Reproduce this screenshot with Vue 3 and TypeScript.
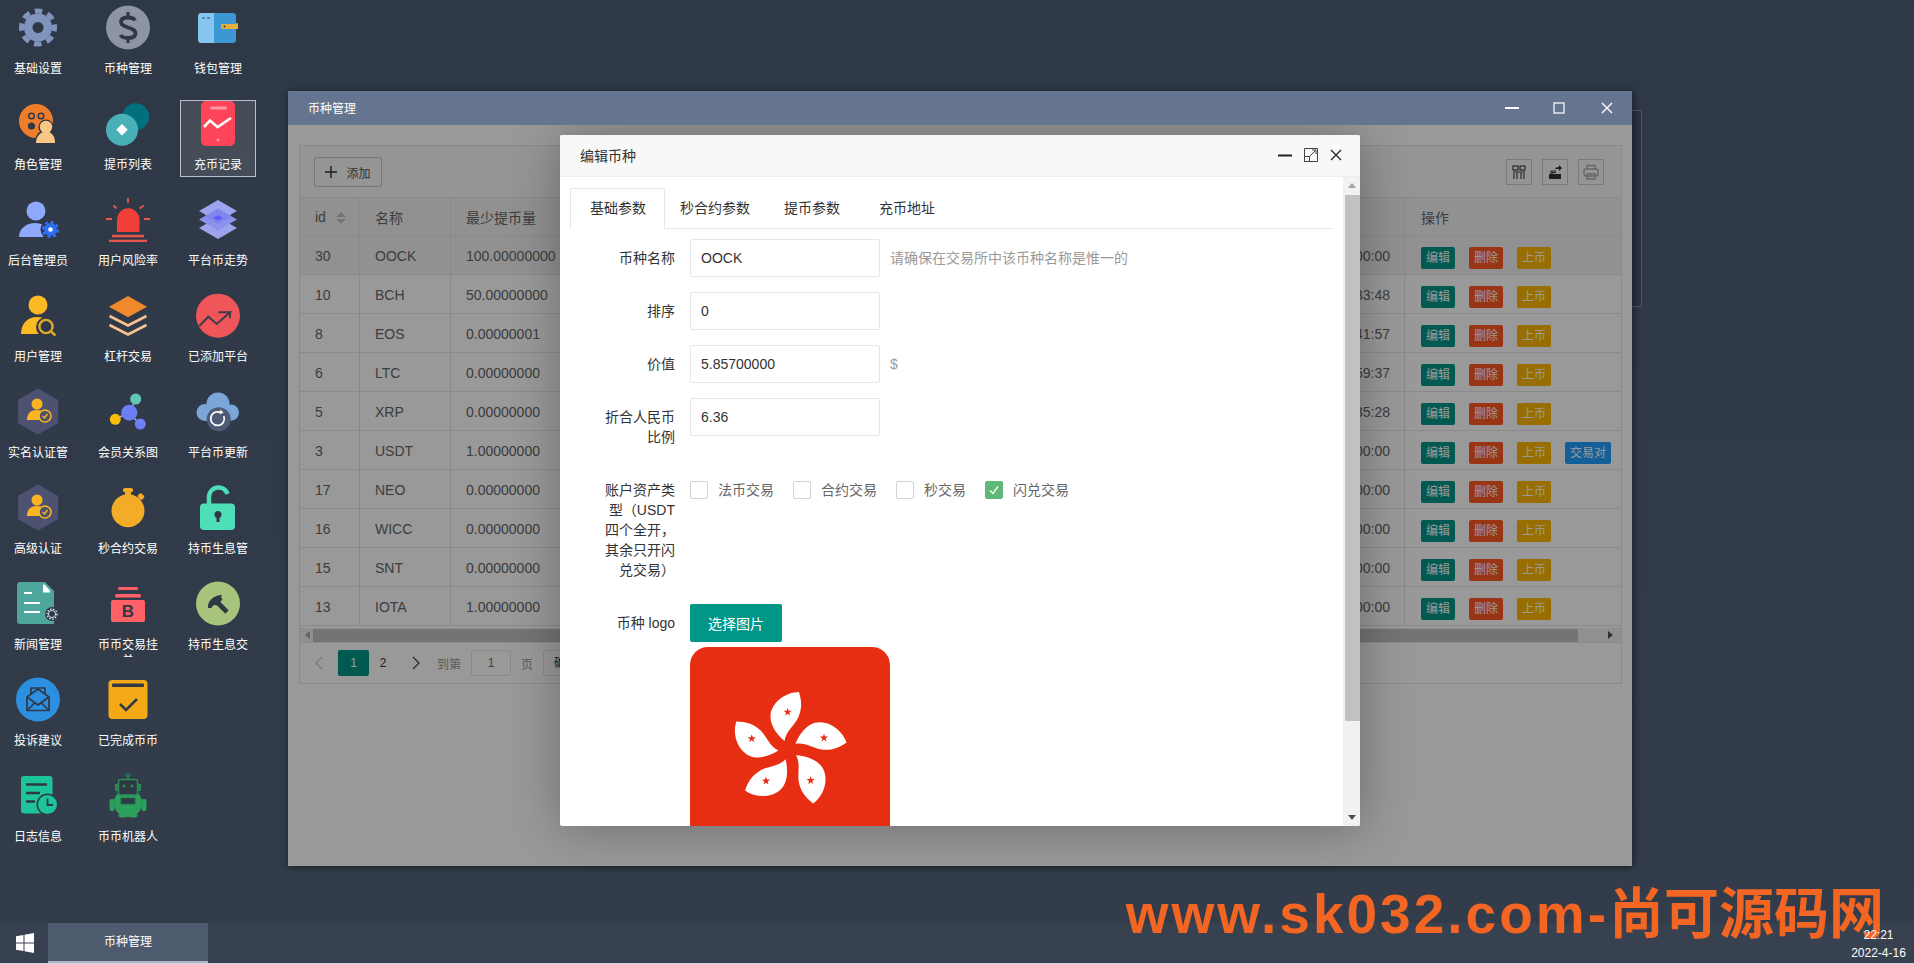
<script setup lang="ts">
const D = "#303846";

const hex = `<path d="M23 1 42.5 12v23L23 46 3.5 35V12z" fill="#4d5270" stroke="#4d5270" stroke-width="1" stroke-linejoin="round"/>
<circle cx="22" cy="16" r="5.5" fill="#fbb422"/><path d="M12 32c0-6 3-10 10-10s10 4 10 10z" fill="#fbb422"/>
<circle cx="30" cy="28" r="6" fill="#4d5270" stroke="#fbb422" stroke-width="1.6"/><path d="m27.5 28 2 2 3-4" fill="none" stroke="#fbb422" stroke-width="1.4"/>`;

const columns: { name: string; svg: string; selected?: boolean }[][] = [
  [
    {
      name: "基础设置",
      svg: `<circle cx="23" cy="23.5" r="14" fill="#7f95bd"/><circle cx="23" cy="23.5" r="16.5" fill="none" stroke="#7f95bd" stroke-width="5" stroke-dasharray="7.5 5.46" stroke-dashoffset="3.7"/><circle cx="23" cy="23.5" r="5.5" fill="${D}"/>`,
    },
    {
      name: "角色管理",
      svg: `<circle cx="21" cy="21" r="17" fill="#ef7e2c"/><circle cx="16.5" cy="16" r="2.8" fill="none" stroke="${D}" stroke-width="1.5"/><circle cx="26" cy="16" r="2.8" fill="none" stroke="${D}" stroke-width="1.5"/><circle cx="16.5" cy="26" r="3.6" fill="${D}"/>
<circle cx="31" cy="27" r="7.6" fill="${D}"/><path d="M19.5 44c0-8 4-12 8-14h7c4 2 7 6 7 14z" fill="${D}"/><circle cx="31" cy="27" r="6.2" fill="#f9c786"/><path d="M21 43c0-6 3-9 7-11h6c4 2 6 5 6 11z" fill="#f9c786"/>`,
    },
    {
      name: "后台管理员",
      svg: `<circle cx="21" cy="15" r="9.5" fill="#8fa8fb"/><path d="M4 41c0-9 8-14 16-14s17 5 17 14z" fill="#8fa8fb"/><circle cx="35.5" cy="33.5" r="10" fill="${D}"/><circle cx="35.5" cy="33.5" r="6.5" fill="#2e6ef0"/><circle cx="35.5" cy="33.5" r="7.4" fill="none" stroke="#2e6ef0" stroke-width="2.6" stroke-dasharray="3.2 2.6"/><circle cx="35.5" cy="33.5" r="2.2" fill="#fff"/>`,
    },
    {
      name: "用户管理",
      svg: `<circle cx="23" cy="13" r="9.5" fill="#fbb924"/><path d="M6 42c0-10 6-17 16-17s16 7 16 17z" fill="#fbb924"/><circle cx="31" cy="35" r="10" fill="${D}"/><circle cx="31" cy="34.5" r="6.6" fill="${D}" stroke="#e0a92c" stroke-width="2.4"/><path d="m36 39.5 4.5 4" stroke="#e0a92c" stroke-width="2.4"/>`,
    },
    { name: "实名认证管", svg: hex },
    { name: "高级认证", svg: hex },
    {
      name: "新闻管理",
      svg: `<path d="M5 2h25l9 9v33H5a3 3 0 0 1-3-3V5a3 3 0 0 1 3-3z" fill="#4fa69c"/><path d="M28 4.5h1.5l5.5 6v2h-7z" fill="#fff"/><path d="M9 13h8M9 23h16M9 32h16" stroke="#fff" stroke-width="2.2"/><circle cx="37" cy="34" r="7" fill="${D}"/><circle cx="37" cy="34" r="3.6" fill="none" stroke="#cde" stroke-width="1"/><circle cx="37" cy="34" r="5" fill="none" stroke="#cde" stroke-width="1.4" stroke-dasharray="1.5 1.5"/>`,
    },
    {
      name: "投诉建议",
      svg: `<circle cx="23" cy="23.5" r="22" fill="#2b90e0"/><g fill="none" stroke="${D}" stroke-width="1.7" stroke-linejoin="round"><path d="M12 21v13.5h22V21L23 13z"/><path d="M12 21l11 8 11-8"/><path d="m12 34.5 8-8M34 34.5l-8-8"/><path d="M16 17.5V12h14v5.5"/></g>`,
    },
    {
      name: "日志信息",
      svg: `<rect x="6" y="4" width="31.5" height="37.5" rx="3" fill="#1dc49a"/><path d="M11 12.5h21M11 21h14M11 29.5h9" stroke="${D}" stroke-width="2.6"/><circle cx="32.5" cy="32.5" r="11" fill="${D}"/><circle cx="32.5" cy="32.5" r="9.5" fill="#1dc49a"/><path d="M32.5 26.5v6.5h5.5" fill="none" stroke="${D}" stroke-width="1.8"/>`,
    },
  ],
  [
    {
      name: "币种管理",
      svg: `<circle cx="23" cy="23.5" r="22" fill="#8d95a5"/><path d="M30 16.5c-2-4-14-4.5-14 1.5 0 6.5 14.5 4.5 14.5 11.5 0 6-13 5.5-15 1.5" fill="none" stroke="${D}" stroke-width="3.8"/><path d="M23 8v6M23 33v6" stroke="${D}" stroke-width="3.2"/>`,
    },
    {
      name: "提币列表",
      svg: `<circle cx="30.7" cy="16.7" r="13.5" fill="#00707f"/><circle cx="17" cy="29.7" r="16" fill="#4ab0b8"/><path d="m17 24 5.7 5.7L17 35.4l-5.7-5.7z" fill="#fff"/>`,
    },
    {
      name: "用户风险率",
      svg: `<path d="M12 36V24a11 11.5 0 0 1 22.5 0v12z" fill="#f1403a"/><path d="M7 40h32M4 45h38" stroke="#e9554f" stroke-width="2.4"/><path d="M23 2v5M8.5 9.5 11.5 12.5M39 9.5l-4.5 3M1 23h6M39 23h6" stroke="#e9554f" stroke-width="1.8"/>`,
    },
    {
      name: "杠杆交易",
      svg: `<path d="m23 4 19 10.7-19 10.6L4 14.7z" fill="#ee8a2b"/><path d="m4.5 24 18.5 9.5L41.5 24M4.5 33 23 42.5 41.5 33" fill="none" stroke="#f6c28f" stroke-width="2.6"/>`,
    },
    {
      name: "会员关系图",
      svg: `<path d="M24 25 31 11M24 25 10 31M24 25 35 36" stroke="#9fb0f5" stroke-width="1.5"/><circle cx="24.3" cy="24.7" r="8" fill="#6d7ff5"/><circle cx="30.7" cy="11" r="5.5" fill="#5ec9b4"/><circle cx="10.3" cy="31.3" r="5.5" fill="#f7bd0a"/><circle cx="35.3" cy="36" r="5.5" fill="#6d7ff5"/>`,
    },
    {
      name: "秒合约交易",
      svg: `<circle cx="23" cy="26.7" r="16.5" fill="#f4ab28"/><rect x="20" y="7" width="6" height="6" fill="#f4ab28"/><rect x="18" y="4" width="10" height="4" rx="1.5" fill="#f4ab28"/><rect x="33" y="10" width="6" height="5" rx="1.5" transform="rotate(40 36 12.5)" fill="#f4ab28"/>`,
    },
    {
      name: "币币交易挂单",
      svg: `<rect x="13" y="7" width="20" height="3" rx="1.5" fill="#ff6166"/><rect x="10" y="14" width="26" height="3.5" rx="1.5" fill="#ff6166"/><rect x="6" y="20" width="34" height="22" rx="2" fill="#ff6166"/><text x="23" y="37" text-anchor="middle" font-family="Liberation Sans, sans-serif" font-weight="700" font-size="17" fill="${D}">B</text>`,
    },
    {
      name: "已完成币币",
      svg: `<rect x="3.5" y="4" width="39" height="39" rx="4" fill="#f4aa16"/><rect x="7" y="7.5" width="32" height="3.6" rx="1" fill="${D}"/><path d="m15 28 6 6 11-11" fill="none" stroke="${D}" stroke-width="2.5"/>`,
    },
    {
      name: "币币机器人",
      svg: `<path d="M23 3v4" stroke="#2a8a53" stroke-width="1.2"/><circle cx="23" cy="3" r="2" fill="none" stroke="#2a8a53"/><circle cx="23" cy="31" r="14" fill="#2ba05d"/><rect x="13.5" y="7.5" width="19" height="15.5" rx="2" fill="${D}" stroke="#2a8a53" stroke-width="1.6"/><circle cx="19" cy="14" r="1.5" fill="#2a8a53"/><circle cx="27" cy="14" r="1.5" fill="#2a8a53"/><rect x="10" y="12" width="3" height="7" fill="#2a8a53"/><rect x="33" y="12" width="3" height="7" fill="#2a8a53"/><rect x="16" y="26" width="14" height="6" fill="${D}" stroke="#1c6f40"/><rect x="4.5" y="27" width="5" height="12" rx="2" fill="#2ba05d"/><rect x="36.5" y="27" width="5" height="12" rx="2" fill="#2ba05d"/><ellipse cx="17.5" cy="43.5" rx="4" ry="2" fill="#2ba05d"/><ellipse cx="28.5" cy="43.5" rx="4" ry="2" fill="#2ba05d"/>`,
    },
  ],
  [
    {
      name: "钱包管理",
      svg: `<path d="M6 9h14v30H6a3 3 0 0 1-3-3V12a3 3 0 0 1 3-3z" fill="#85c5ef"/><path d="M19 9h19a3 3 0 0 1 3 3v24a3 3 0 0 1-3 3H19z" fill="#3d97d3"/><rect x="7" y="13" width="3" height="2" fill="#4f8fc0"/><rect x="12" y="13" width="3" height="2" fill="#4f8fc0"/><path d="M26 20h13l4-1v6H28a2.5 2.5 0 0 1-2-2.5z" fill="#e8ad3a"/><circle cx="29.5" cy="22.5" r="1" fill="${D}"/>`,
    },
    {
      name: "充币记录",
      selected: true,
      svg: `<rect x="6" y="1" width="34" height="45" rx="5" fill="#fd4458"/><rect x="15" y="6.5" width="17" height="3" rx="1.5" fill="#ff9aa5"/><path d="m9 27 6-6.5 7.5 6.5L36 18" fill="none" stroke="#fff" stroke-width="2.6"/><circle cx="23" cy="40" r="1.5" fill="#ff9aa5"/>`,
    },
    {
      name: "平台币走势",
      svg: `<path d="m23 21 19 11-19 11L4 32z" fill="#9ea3ee"/><path d="m23 12.5 19 11-19 11-19-11z" fill="#8d92ee"/><path d="m23 4 19 11-19 11L4 15z" fill="#9ea3ee"/><path d="m23 12.5 14 8-14 7.5-14-7.5z" fill="#7f86ee"/><path d="m23 19 5 3-5 2.5-5-2.5z" fill="#5e5eff"/>`,
    },
    {
      name: "已添加平台",
      svg: `<circle cx="23" cy="23.7" r="22" fill="#f0555a"/><path d="m4.3 34 9-9.3 8.5 7.3L35 20.3H23.3M35 20.3v6" fill="none" stroke="#3a3d4a" stroke-width="2"/>`,
    },
    {
      name: "平台币更新",
      svg: `<circle cx="23" cy="16" r="11.5" fill="#7aa7d8"/><circle cx="10" cy="24.5" r="8.5" fill="#7aa7d8"/><circle cx="36" cy="24.5" r="8" fill="#7aa7d8"/><rect x="10" y="22" width="26" height="11" fill="#7aa7d8"/><circle cx="23.7" cy="31.3" r="12" fill="#4d5b75"/><path d="M28.8 28a6.8 6.8 0 1 1-2.5-3" fill="none" stroke="#fff" stroke-width="1.7"/><path d="m25.5 21.5 3 3.2-3.8 1.5z" fill="#fff"/>`,
    },
    {
      name: "持币生息管",
      svg: `<rect x="5" y="19.5" width="35" height="26.5" rx="4" fill="#4fdfb8"/><path d="M14 20v-8a9.5 9.5 0 0 1 18.5-2" fill="none" stroke="#4fdfb8" stroke-width="4.5"/><circle cx="23" cy="30.5" r="3.5" fill="${D}"/><rect x="21.5" y="31" width="3" height="7" fill="${D}"/>`,
    },
    {
      name: "持币生息交",
      svg: `<circle cx="23" cy="23.5" r="22" fill="#a8c47c"/><path d="M22 22l10 10" stroke="${D}" stroke-width="4.6"/><path d="M13 28c-1-6 5-13 14-13-1 2-1 3 .5 4.5l-6 6c-2-1-4 0-5 2.5z" fill="${D}"/>`,
    },
  ],
];

const rows = [
  { id: 30, name: "OOCK", min: "100.00000000", time: "2020-01-01 00:00:00", hover: true },
  { id: 10, name: "BCH", min: "50.00000000", time: "2019-08-23 13:33:48" },
  { id: 8, name: "EOS", min: "0.00000001", time: "2019-08-23 10:41:57" },
  { id: 6, name: "LTC", min: "0.00000000", time: "2019-08-23 12:59:37" },
  { id: 5, name: "XRP", min: "0.00000000", time: "2019-08-23 09:35:28" },
  { id: 3, name: "USDT", min: "1.00000000", time: "2019-01-01 00:00:00", pair: true },
  { id: 17, name: "NEO", min: "0.00000000", time: "2020-01-01 00:00:00" },
  { id: 16, name: "WICC", min: "0.00000000", time: "2020-01-01 00:00:00" },
  { id: 15, name: "SNT", min: "0.00000000", time: "2020-01-01 00:00:00" },
  { id: 13, name: "IOTA", min: "1.00000000", time: "2020-01-01 00:00:00" },
];

const tabs = ["基础参数", "秒合约参数", "提币参数", "充币地址"];
const assetTypes = [
  { label: "法币交易", checked: false },
  { label: "合约交易", checked: false },
  { label: "秒交易", checked: false },
  { label: "闪兑交易", checked: true },
];
const petals = [0, 72, 144, 216, 288];
</script>

<template>
  <div class="desktop">
    <div class="icons">
      <template v-for="(col, c) in columns" :key="c">
        <div
          v-for="item in col"
          :key="item.name"
          class="shortcut"
          :class="{ selected: item.selected }"
        >
          <svg class="shortcut-icon" viewBox="0 0 46 46" width="46" height="46" v-html="item.svg"></svg>
          <div class="shortcut-label">{{ item.name }}</div>
        </div>
      </template>
    </div>

    <div class="ghost-window"></div>

    <div class="window">
      <div class="window-title">
        <span>币种管理</span>
        <div class="window-controls">
          <svg width="14" height="14" viewBox="0 0 14 14"><path d="M0 7h14" stroke="#fff" stroke-width="2" /></svg>
          <svg width="12" height="12" viewBox="0 0 12 12"><rect x="1" y="1" width="10" height="10" fill="none" stroke="#dfe4ec" stroke-width="1.5" /></svg>
          <svg width="12" height="12" viewBox="0 0 12 12"><path d="M1 1l10 10M11 1 1 11" stroke="#fff" stroke-width="1.4" /></svg>
        </div>
      </div>

      <div class="window-body">
        <div class="panel">
          <div class="toolbar">
            <button class="add-btn">
              <svg width="12" height="12" viewBox="0 0 12 12"><path d="M6 0v12M0 6h12" stroke="#333" stroke-width="1.4" /></svg>
              添加
            </button>
            <div class="tools">
              <div class="tool">
                <svg width="14" height="14" viewBox="0 0 14 14" fill="none" stroke="#333" stroke-width="1.1">
                  <rect x="1" y="1" width="5" height="4" /><rect x="8" y="1" width="5" height="4" />
                  <path d="M1 7h12M2 8v6M5 8v6M9 8v6M12 8v6" />
                </svg>
              </div>
              <div class="tool">
                <svg width="14" height="14" viewBox="0 0 14 14">
                  <path d="M1 9h12v5H1z" fill="#333" /><path d="M3 9V6h5M4 9V7.5h4" fill="none" stroke="#333" />
                  <path d="M7 4c1-2 3-2 4-2V0l3 3-3 3V4c-2 0-3 0-4 0z" fill="#333" />
                </svg>
              </div>
              <div class="tool">
                <svg width="16" height="16" viewBox="0 0 16 16" fill="none" stroke="#aaa" stroke-width="1.4">
                  <rect x="1" y="5" width="14" height="7" rx="2" /><path d="M4 5V1.5h8V5M4 10h8v5H4z" />
                </svg>
              </div>
            </div>
          </div>

          <table class="grid">
            <colgroup>
              <col style="width: 60px" /><col style="width: 91px" /><col style="width: 150px" />
              <col /><col style="width: 165px" /><col style="width: 216px" />
            </colgroup>
            <thead>
              <tr>
                <th>
                  id
                  <span class="sort"><i class="up"></i><i class="down"></i></span>
                </th>
                <th>名称</th>
                <th>最少提币量</th>
                <th></th>
                <th></th>
                <th>操作</th>
              </tr>
            </thead>
            <tbody>
              <tr v-for="row in rows" :key="row.id" :class="{ hover: row.hover }">
                <td>{{ row.id }}</td>
                <td>{{ row.name }}</td>
                <td>{{ row.min }}</td>
                <td></td>
                <td class="time">{{ row.time }}</td>
                <td>
                  <div class="ops">
                    <span class="op teal">编辑</span>
                    <span class="op red">删除</span>
                    <span class="op yellow">上币</span>
                    <span v-if="row.pair" class="op blue">交易对</span>
                  </div>
                </td>
              </tr>
            </tbody>
          </table>

          <div class="hscroll">
            <i class="arrow-left"></i>
            <div class="hthumb"></div>
            <i class="arrow-right"></i>
          </div>

          <div class="pager">
            <svg width="10" height="14" viewBox="0 0 10 14"><path d="M8 1 2 7l6 6" fill="none" stroke="#ccc" stroke-width="1.3" /></svg>
            <span class="page current">1</span>
            <span class="page">2</span>
            <svg class="next" width="10" height="14" viewBox="0 0 10 14"><path d="m2 1 6 6-6 6" fill="none" stroke="#444" stroke-width="1.3" /></svg>
            <span class="pager-text">到第</span>
            <span class="page-input">1</span>
            <span class="pager-text">页</span>
            <span class="page-go">确定</span>
          </div>
        </div>

        <div class="shade"></div>

        <div class="dialog">
          <div class="dialog-head">
            <span>编辑币种</span>
            <div class="dialog-controls">
              <svg width="14" height="14" viewBox="0 0 14 14"><path d="M0 7.5h14" stroke="#222" stroke-width="2" /></svg>
              <svg width="14" height="14" viewBox="0 0 14 14" fill="none" stroke="#444">
                <path d="M.5 8V.5h13v13H6" /><rect x=".5" y="8.5" width="5" height="5" /><path d="M6 8l6-6M8 2h4v4" />
              </svg>
              <svg width="12" height="12" viewBox="0 0 12 12"><path d="M1 1l10 10M11 1 1 11" stroke="#222" stroke-width="1.3" /></svg>
            </div>
          </div>

          <div class="dialog-body">
            <div class="dialog-content">
              <ul class="tabs">
                <li v-for="(tab, i) in tabs" :key="tab" class="tab" :class="{ active: i === 0 }">{{ tab }}</li>
              </ul>

              <form class="form" @submit.prevent>
                <div class="form-row">
                  <label>币种名称</label>
                  <input class="input" type="text" value="OOCK" />
                  <span class="hint">请确保在交易所中该币种名称是惟一的</span>
                </div>
                <div class="form-row">
                  <label>排序</label>
                  <input class="input" type="text" value="0" />
                </div>
                <div class="form-row">
                  <label>价值</label>
                  <input class="input" type="text" value="5.85700000" />
                  <span class="hint">$</span>
                </div>
                <div class="form-row">
                  <label>折合人民币比例</label>
                  <input class="input" type="text" value="6.36" />
                </div>
                <div class="form-row">
                  <label>账户资产类型（USDT四个全开，其余只开闪兑交易）</label>
                  <div class="checks">
                    <div v-for="t in assetTypes" :key="t.label" class="check">
                      <span class="box" :class="{ on: t.checked }">
                        <svg v-if="t.checked" width="12" height="12" viewBox="0 0 12 12"><path d="m2 6.5 3 3 5-7" fill="none" stroke="#fff" stroke-width="1.3" /></svg>
                      </span>
                      {{ t.label }}
                    </div>
                  </div>
                </div>
                <div class="form-row logo-row">
                  <label>币种 logo</label>
                  <div>
                    <button class="pick" type="button">选择图片</button>
                    <svg class="flag" width="200" height="200" viewBox="-100 -100 200 200">
                      <rect x="-100" y="-100" width="200" height="200" rx="18" fill="#e72e13" />
                      <g transform="translate(-2 3)">
                        <g v-for="deg in petals" :key="deg" :transform="`rotate(${deg})`">
                          <path
                            d="M-3.5-9C-11-15-18-25-17.5-34-17-47-3-58 11-58 14-48 14-41 10-32 6-24-2-19-3.5-9z"
                            fill="#fff"
                          />
                          <polygon
                            transform="translate(2 -6) scale(.8)"
                            points="-3,-45.5 -1.8,-41.7 2.2,-41.7 -1,-39.3 .2,-35.5 -3,-37.8 -6.2,-35.5 -5,-39.3 -8.2,-41.7 -4.2,-41.7"
                            fill="#e72e13"
                          />
                        </g>
                      </g>
                    </svg>
                  </div>
                </div>
              </form>
            </div>

            <div class="vscroll">
              <i class="arrow-up"></i>
              <div class="vthumb"></div>
              <i class="arrow-down"></i>
            </div>
          </div>
        </div>
      </div>
    </div>

    <div class="watermark"><span class="wm-latin">www.sk032.com-</span>尚可源码网</div>

    <div class="taskbar">
      <div class="start">
        <svg width="18" height="20" viewBox="0 0 18 20">
          <path d="M0 3.2 7.5 2v7.5H0zM8.5 1.8 18 0v9.5H8.5zM0 10.5h7.5V18L0 16.8zM8.5 10.5H18V20l-9.5-1.8z" fill="#fff" />
        </svg>
      </div>
      <div class="task">币种管理</div>
      <div class="clock">
        <div>22:21</div>
        <div>2022-4-16</div>
      </div>
    </div>
  </div>
</template>

<style>
html,
body {
  margin: 0;
  overflow: hidden;
}
</style>

<style scoped>
.desktop {
  position: relative;
  width: 1914px;
  height: 964px;
  overflow: hidden;
  background: linear-gradient(#2f3846, #333c4a);
  font-family: "Liberation Sans", "Noto Sans CJK SC", sans-serif;
  display: flex;
  flex-direction: column;
  justify-content: space-between;
}

.icons {
  display: grid;
  grid-auto-flow: column;
  grid-template-rows: repeat(9, 77px);
  grid-auto-columns: 76px;
  column-gap: 14px;
  row-gap: 19px;
  padding-top: 4px;
  height: 0;
}

.shortcut {
  height: 77px;
  overflow: hidden;
  text-align: center;
  color: #fff;
  box-sizing: border-box;
}

.shortcut.selected {
  background: rgba(255, 255, 255, 0.1);
  box-shadow: inset 0 0 0 1px #b9bfc9;
}

.shortcut-icon {
  display: block;
  margin: 0 auto 11px;
}

.shortcut-label {
  width: 66px;
  margin: 0 auto;
  font-size: 12px;
  line-height: 16px;
}

.ghost-window {
  position: absolute;
  left: 1400px;
  top: 110px;
  width: 240px;
  height: 195px;
  border: 1px solid #4e5a6c;
  border-radius: 2px;
  background: #2a3240;
}

.window {
  position: absolute;
  left: 288px;
  top: 91px;
  width: 1344px;
  height: 775px;
  display: flex;
  flex-direction: column;
  box-shadow: 1px 1px 8px rgba(0, 0, 0, 0.5);
}

.window-title {
  height: 34px;
  flex: none;
  box-sizing: border-box;
  display: flex;
  align-items: center;
  justify-content: space-between;
  padding: 0 19px 2px 20px;
  background: #66758f;
  color: #fff;
  font-size: 12px;
}

.window-controls {
  display: flex;
  align-items: center;
  gap: 36px;
  margin-top: 2px;
}

.window-controls svg:first-child {
  margin-right: -2px;
}

.window-body {
  position: relative;
  flex: 1;
  overflow: hidden;
  background: #fff;
  padding: 20px 10px 0 11px;
}

.shade {
  position: absolute;
  inset: 0;
  background: rgba(0, 0, 0, 0.4);
}

.panel {
  width: 1323px;
  box-sizing: border-box;
  border: 1px solid #e6e6e6;
  color: #666;
  font-size: 14px;
}

.toolbar {
  height: 51px;
  box-sizing: border-box;
  padding: 11px 17px 0 14px;
  display: flex;
  justify-content: space-between;
  background: #f8f8f8;
}

.add-btn {
  width: 68px;
  height: 30px;
  padding: 0;
  box-sizing: border-box;
  border: 1px solid #c9c9c9;
  border-radius: 2px;
  background: transparent;
  color: #555;
  font: 12px "Liberation Sans", "Noto Sans CJK SC", sans-serif;
  display: flex;
  align-items: center;
  justify-content: center;
  gap: 9px;
}

.tools {
  display: flex;
  gap: 10px;
  padding-top: 2px;
}

.tool {
  width: 26px;
  height: 26px;
  box-sizing: border-box;
  border: 1px solid #ccc;
  display: flex;
  align-items: center;
  justify-content: center;
}

.grid {
  width: 100%;
  table-layout: fixed;
  border-collapse: separate;
  border-spacing: 0;
}

.grid th,
.grid td {
  height: 39px;
  box-sizing: border-box;
  padding: 1px 15px 0;
  text-align: left;
  font-weight: 400;
  white-space: nowrap;
  overflow: hidden;
  border-bottom: 1px solid #e6e6e6;
  border-right: 1px solid #e6e6e6;
}

.grid th {
  background: #f2f2f2;
  border-top: 1px solid #e6e6e6;
  padding-top: 0;
}

.grid th:last-child {
  padding-left: 16px;
}

.grid th:last-child,
.grid td:last-child {
  border-right: 0;
}

.grid tr.hover td {
  background: #f2f2f2;
}

.grid td.time {
  padding-left: 20px;
}

.sort {
  display: inline-block;
  vertical-align: middle;
  margin-left: 6px;
  width: 10px;
}

.sort i {
  display: block;
  width: 0;
  height: 0;
  border: 5px solid transparent;
}

.sort .up {
  border-top: 0;
  border-bottom-color: #c2c2c2;
  margin-bottom: 2px;
}

.sort .down {
  border-bottom: 0;
  border-top-color: #c2c2c2;
}

.ops {
  display: flex;
  gap: 14px;
  padding: 4px 0 0 1px;
}

.op {
  height: 22px;
  line-height: 22px;
  padding: 0 5px;
  border-radius: 2px;
  color: #fff;
  font-size: 12px;
}

.teal {
  background: #009688;
}

.red {
  background: #ff5722;
}

.yellow {
  background: #ffb800;
}

.blue {
  background: #1e9fff;
}

.hscroll {
  height: 14px;
  margin-top: 2px;
  display: flex;
  align-items: center;
  background: #f1f1f1;
  position: relative;
  border-bottom: 1px solid #e6e6e6;
}

.hthumb {
  width: 1265px;
  height: 13px;
  margin-left: 3px;
  background: #c1c1c1;
}

.arrow-left {
  margin-left: 5px;
  border: 4px solid transparent;
  border-left: 0;
  border-right: 5px solid #a3a3a3;
  width: 0;
  height: 0;
}

.arrow-right {
  margin-left: 30px;
  border: 4px solid transparent;
  border-right: 0;
  border-left: 5px solid #505050;
  width: 0;
  height: 0;
}

.pager {
  height: 40px;
  box-sizing: border-box;
  display: flex;
  align-items: center;
  padding-left: 14px;
  font-size: 12px;
  color: #999;
}

.page {
  width: 28px;
  height: 26px;
  line-height: 26px;
  text-align: center;
  color: #333;
}

.page.current {
  width: 31px;
  margin-left: 14px;
  background: #009688;
  color: #fff;
  border-radius: 2px;
}

.next {
  margin: 0 6px 0 14px;
}

.pager-text {
  margin: 0 10px;
  color: #999;
}

.page-input {
  width: 40px;
  height: 26px;
  line-height: 24px;
  box-sizing: border-box;
  text-align: center;
  border: 1px solid #e6e6e6;
  border-radius: 2px;
  color: #666;
}

.page-go {
  padding: 0 10px;
  height: 26px;
  line-height: 24px;
  box-sizing: border-box;
  border: 1px solid #e6e6e6;
  border-radius: 2px;
  color: #333;
}

.dialog {
  position: absolute;
  left: 272px;
  top: 10px;
  width: 800px;
  height: 691px;
  display: flex;
  flex-direction: column;
  background: #fff;
  border-radius: 2px;
  overflow: hidden;
  color: #333;
  box-shadow: 1px 1px 50px rgba(0, 0, 0, 0.3);
}

.dialog-head {
  height: 42px;
  flex: none;
  box-sizing: border-box;
  display: flex;
  align-items: center;
  justify-content: space-between;
  padding: 0 18px 2px 20px;
  background: #f8f8f8;
  border-bottom: 1px solid #eee;
  font-size: 14px;
}

.dialog-controls {
  display: flex;
  align-items: center;
  gap: 12px;
}

.dialog-body {
  flex: 1;
  min-height: 0;
  display: flex;
}

.dialog-content {
  flex: 1;
  min-width: 0;
  padding: 11px 10px 0;
  overflow: hidden;
}

.tabs {
  display: flex;
  margin: 0;
  padding: 0;
  list-style: none;
  height: 40px;
  border-bottom: 1px solid #e6e6e6;
  font-size: 14px;
}

.tab {
  height: 40px;
  line-height: 40px;
  padding: 0 17px;
  box-sizing: border-box;
}

.tab.active {
  height: 41px;
  padding: 0 18px 0 19px;
  background: #fff;
  border: 1px solid #e6e6e6;
  border-bottom: 0;
  line-height: 39px;
  border-radius: 2px 2px 0 0;
  margin-right: -2px;
}

.tab:nth-child(3) {
  padding-right: 22px;
}

.form {
  padding: 10px 0 0 10px;
}

.form-row {
  display: flex;
  align-items: flex-start;
  margin-bottom: 15px;
}

.form-row label {
  flex: none;
  width: 110px;
  box-sizing: border-box;
  padding: 9px 15px;
  text-align: right;
  font-size: 14px;
  line-height: 20px;
  word-break: break-all;
}

.input {
  width: 190px;
  height: 38px;
  box-sizing: border-box;
  padding: 0 10px;
  border: 1px solid #e6e6e6;
  border-radius: 2px;
  outline: none;
  font: 14px "Liberation Sans", "Noto Sans CJK SC", sans-serif;
  color: #333;
}

.hint {
  margin-left: 10px;
  line-height: 38px;
  font-size: 14px;
  color: #999;
}

.checks {
  display: flex;
  padding-top: 10px;
}

.check {
  display: flex;
  align-items: center;
  height: 18px;
  gap: 10px;
  margin-right: 19px;
  font-size: 14px;
  line-height: 16px;
  color: #666;
}

.box {
  width: 18px;
  height: 18px;
  box-sizing: border-box;
  border: 1px solid #d2d2d2;
  border-radius: 2px;
  display: flex;
  align-items: center;
  justify-content: center;
}

.box.on {
  background: #5fb878;
  border-color: #5fb878;
}

.pick {
  display: block;
  width: 92px;
  height: 38px;
  border: 0;
  border-radius: 2px;
  background: #009688;
  color: #fff;
  font: 14px "Liberation Sans", "Noto Sans CJK SC", sans-serif;
}

.flag {
  display: block;
  margin-top: 5px;
}

.vscroll {
  flex: none;
  width: 17px;
  background: #f1f1f1;
  position: relative;
}

.vthumb {
  position: absolute;
  left: 2px;
  right: 0;
  top: 18px;
  height: 526px;
  background: #c1c1c1;
}

.arrow-up,
.arrow-down {
  position: absolute;
  left: 5px;
  width: 0;
  height: 0;
  border: 4px solid transparent;
}

.arrow-up {
  top: 6px;
  border-top: 0;
  border-bottom: 5px solid #a3a3a3;
}

.arrow-down {
  bottom: 6px;
  border-bottom: 0;
  border-top: 5px solid #505050;
}

.watermark {
  position: absolute;
  right: 30px;
  top: 882px;
  color: #f26522;
  font-size: 55px;
  font-weight: 700;
  line-height: 64px;
  white-space: nowrap;
  z-index: 2;
}

.wm-latin {
  letter-spacing: 3px;
}

.taskbar {
  height: 41px;
  box-sizing: border-box;
  display: flex;
  background: #384150;
  border-bottom: 1px solid #cdd3dc;
  color: #fff;
  font-size: 12px;
}

.start {
  width: 48px;
  flex: none;
  display: flex;
  align-items: center;
  justify-content: center;
  padding-left: 1px;
  box-sizing: border-box;
}

.task {
  width: 160px;
  text-align: center;
  line-height: 38px;
  background: #4e5a6e;
  border-bottom: 2px solid #aeb7c4;
  box-sizing: border-box;
}

.clock {
  margin-left: auto;
  width: 63px;
  padding-right: 8px;
  box-sizing: border-box;
  text-align: center;
  line-height: 18px;
  padding-top: 3px;
  position: relative;
  z-index: 3;
}
</style>
